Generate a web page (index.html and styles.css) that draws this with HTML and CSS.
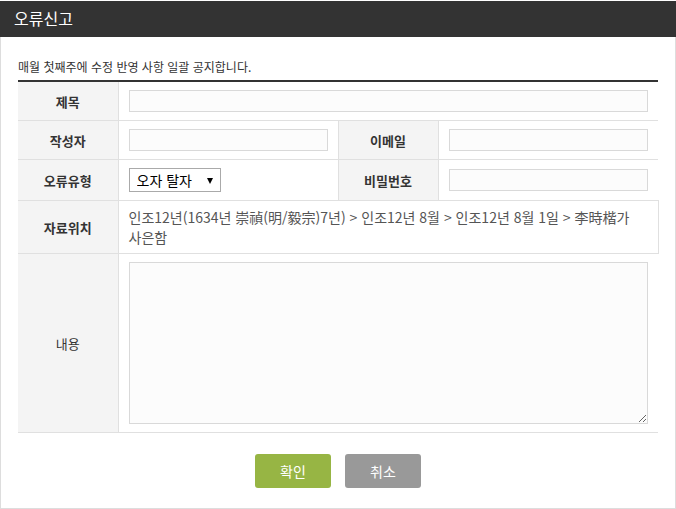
FILE: index.html
```html
<!DOCTYPE html>
<html lang="ko">
<head>
  <meta charset="UTF-8">
  <title>오류신고</title>
  <link rel="stylesheet" href="styles.css">
</head>
<body>
  <div class="popup">
    <h1 class="popup-title">오류신고</h1>
    <div class="popup-body">
      <p class="notice">매월 첫째주에 수정 반영 사항 일괄 공지합니다.</p>
      <table class="report-table">
        <colgroup>
          <col class="col-label">
          <col class="col-field">
          <col class="col-label">
          <col class="col-field">
        </colgroup>
        <tr>
          <th>제목</th>
          <td colspan="3"><input type="text" class="field"></td>
        </tr>
        <tr>
          <th>작성자</th>
          <td><input type="text" class="field"></td>
          <th>이메일</th>
          <td><input type="text" class="field"></td>
        </tr>
        <tr>
          <th>오류유형</th>
          <td>
            <span class="select-wrap">
              <select class="select">
                <option>오자 탈자</option>
              </select>
            </span>
          </td>
          <th>비밀번호</th>
          <td><input type="password" class="field"></td>
        </tr>
        <tr class="location-row">
          <th>자료위치</th>
          <td colspan="3" class="location">인조12년(1634년 崇禎(明/毅宗)7년) &gt; 인조12년 8월 &gt; 인조12년 8월 1일 &gt; 李時楷가 사은함</td>
        </tr>
        <tr class="content-row">
          <th class="plain">내용</th>
          <td colspan="3"><textarea class="textarea"></textarea></td>
        </tr>
      </table>
      <div class="buttons">
        <button type="button" class="btn btn-ok">확인</button>
        <button type="button" class="btn btn-cancel">취소</button>
      </div>
    </div>
  </div>
</body>
</html>
```

FILE: styles.css
```css
html, body {
  margin: 0;
  padding: 0;
  background: #fff;
}

body {
  font-family: "Noto Sans CJK KR", "Noto Sans", sans-serif;
  color: #333;
}

.popup {
  width: 674px;
  height: 507px;
  border: 1px solid #ddd;
  border-top: 0;
  box-sizing: content-box;
}

.popup-title {
  margin: 0 -1px;
  height: 36px;
  margin-top: 1px;
  padding-left: 14px;
  background: #333;
  color: #fff;
  font-size: 16px;
  font-weight: normal;
  line-height: 35px;
}

.popup-body {
  padding: 20px 17px 0;
}

.notice {
  margin: 0 0 3px;
  font-size: 12px;
  line-height: 20px;
  color: #333;
}

.report-table {
  width: 640px;
  border-collapse: collapse;
  table-layout: fixed;
  border-top: 2px solid #333;
  font-size: 13px;
}

.col-label {
  width: 100px;
}

.col-field {
  width: 220px;
}

.report-table th,
.report-table td {
  border-bottom: 1px solid #e0e0e0;
  padding: 8px 10px;
  height: 22px;
  vertical-align: middle;
}

.report-table th {
  background: #f4f4f4;
  border-right: 1px solid #e0e0e0;
  border-left: 1px solid #e0e0e0;
  font-weight: bold;
  color: #333;
  text-align: center;
}

.report-table tr th:first-child {
  border-left: 0;
}

.report-table th.plain {
  font-weight: normal;
}

.field {
  display: block;
  width: 100%;
  height: 22px;
  margin: 0;
  box-sizing: border-box;
  border: 1px solid #d9d9d9;
  background: #fcfcfc;
  font-family: inherit;
}

.select-wrap {
  position: relative;
  display: inline-block;
}

.select-wrap::after {
  content: "";
  position: absolute;
  right: 8px;
  top: 10px;
  border-left: 3px solid transparent;
  border-right: 3px solid transparent;
  border-top: 6px solid #000;
  pointer-events: none;
}

.select {
  -webkit-appearance: none;
  appearance: none;
  width: 92px;
  height: 24px;
  margin: 0;
  padding: 0 0 0 7px;
  border: 1px solid #aaa;
  background: #fff;
  color: #000;
  font-family: inherit;
  font-size: 14px;
  line-height: 22px;
}

.location-row td {
  padding: 6px 10px;
  font-size: 14px;
  line-height: 20px;
  color: #555;
  word-break: keep-all;
  border-right: 1px solid #e0e0e0;
}

.textarea {
  display: block;
  width: 100%;
  height: 162px;
  margin: 0;
  box-sizing: border-box;
  border: 1px solid #d9d9d9;
  background: #fcfcfc;
  font-family: inherit;
}

.buttons {
  display: flex;
  justify-content: center;
  gap: 14px;
  margin-top: 21px;
}

.btn {
  width: 76px;
  height: 34px;
  border: 0;
  border-radius: 3px;
  color: #fff;
  font-family: inherit;
  font-size: 14px;
  cursor: pointer;
}

.btn-ok {
  background: #97b544;
}

.btn-cancel {
  background: #999;
}
```
